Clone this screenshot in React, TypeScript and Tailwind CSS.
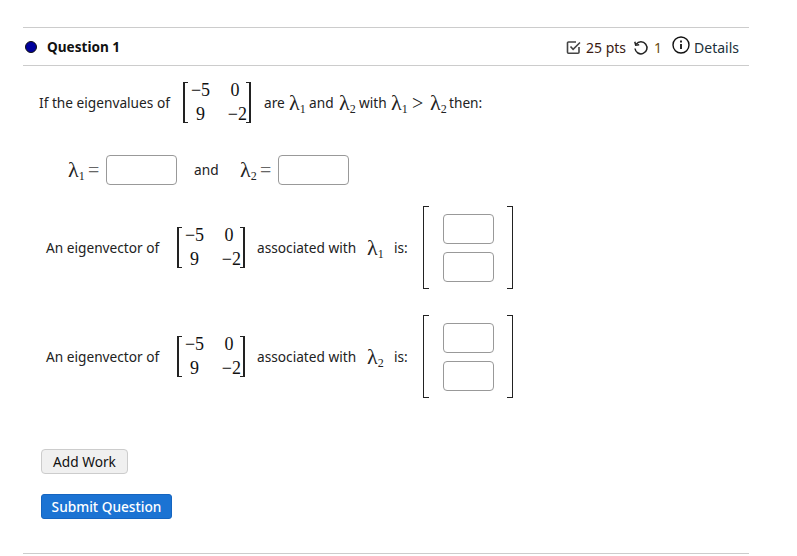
import React from "react";

function Lambda({ n, className = "" }: { n: number; className?: string }) {
  return (
    <span className={`font-['Liberation_Serif',serif] text-[#222] inline-flex items-baseline text-[22px] leading-none ${className}`}>
      <span className="font-['Liberation_Serif',serif]">λ</span>
      <sub className="font-['Liberation_Serif',serif] text-[12px] leading-none static align-baseline translate-y-[3px]">{n}</sub>
    </span>
  );
}

function Cell({ children, className = "" }: { children: React.ReactNode; className?: string }) {
  return <span className={`font-['Liberation_Serif',serif] ${className}`}>{children}</span>;
}

function Matrix() {
  return (
    <div className="text-[#111] relative w-[68px] h-[41px] text-[18px] leading-none">
      <div className="absolute left-0 top-0 bottom-0 w-[5px] border-l-2 border-t border-b border-[#222]" />
      <div className="absolute right-0 top-0 bottom-0 w-[5px] border-r-2 border-t border-b border-[#222]" />
      <div className="grid grid-cols-[33px_30px] gap-x-[3px] pl-[1px] -mt-[1px] gap-y-[6px] text-center">
        <Cell>−5</Cell>
        <Cell>0</Cell>
        <Cell>9</Cell>
        <Cell className="text-right pr-[3px]">−2</Cell>
      </div>
    </div>
  );
}

function Box({ w }: { w: string }) {
  return <input type="text" className={`${w} h-[30px] bg-white border border-[#999] rounded-[4px]`} />;
}

function VectorInput() {
  return (
    <div className="relative w-[90px] h-[83px] flex flex-col items-center justify-center gap-[8px]">
      <div className="absolute left-0 top-0 bottom-0 w-[6px] border-l border-t border-b border-[#222]" />
      <div className="absolute right-0 top-0 bottom-0 w-[6px] border-r border-t border-b border-[#222]" />
      <Box w="w-[51px]" />
      <Box w="w-[51px]" />
    </div>
  );
}

function EigenRow({ n, className }: { n: number; className: string }) {
  return (
    <div className={`flex items-center pl-[46px] ${className}`}>
      <span className="w-[131px]">An eigenvector of</span>
      <Matrix />
      <span className="ml-[12px] w-[110px]">associated with</span>
      <Lambda n={n} className="w-[27px]" />
      <span className="w-[29px]">is:</span>
      <VectorInput />
    </div>
  );
}

export default function App() {
  return (
    <div className="w-[797px] h-[556px] bg-white overflow-hidden font-['Noto_Sans',sans-serif] text-[13.7px] leading-[18px] text-[#222] pt-[27px]">
      <div className="mx-[23px] w-[726px] h-[39px] border-y border-[#ccc] flex items-center justify-between">
        <div className="flex items-center">
          <span className="ml-[2px] w-[12px] h-[12px] rounded-full bg-[#00009c] border border-[#111]" />
          <span className="ml-[10px] font-bold text-[13.6px] text-[#111]">Question 1</span>
        </div>
        <div className="flex items-center text-[14px] pr-[10px] pt-[2px] text-[#333]">
          <svg width="15" height="15" viewBox="0 0 15 15" fill="none" stroke="#444" strokeWidth="1.6">
            <path d="M13 7v5.2a1 1 0 0 1-1 1H2.5a1 1 0 0 1-1-1V3a1 1 0 0 1 1-1H10" />
            <path d="M4.5 6.5l2.6 2.8L14 2.5" />
          </svg>
          <span className="ml-[5px] text-[#3a1a12]">25 pts</span>
          <svg className="ml-[7px]" width="16" height="16" viewBox="0 0 16 16" fill="none" stroke="#222" strokeWidth="1.5">
            <path d="M3.2 4.2A6 6 0 1 1 2 8.5" />
            <path d="M1.8 1.8l.9 3.4 3.5-.5" />
          </svg>
          <span className="ml-[5px] text-[#6b4a10]">1</span>
          <svg className="ml-[10px] -mt-[5px]" width="18" height="18" viewBox="0 0 18 18" fill="none" stroke="#111" strokeWidth="1.4">
            <circle cx="9" cy="9" r="8" />
            <path d="M9 8v5" strokeWidth="1.8" />
            <path d="M9 4.6v1.8" strokeWidth="1.8" />
          </svg>
          <span className="ml-[4px] text-[#20303a]">Details</span>
        </div>
      </div>

      <div className="flex items-center pl-[39px] mt-[16px]">
        <span className="w-[144px]">If the eigenvalues of</span>
        <Matrix />
        <span className="ml-[13px] w-[25px]">are</span>
        <Lambda n={1} className="w-[20px]" />
        <span className="w-[30px]">and</span>
        <Lambda n={2} className="w-[20px]" />
        <span className="w-[32px]">with</span>
        <Lambda n={1} className="w-[21px]" />
        <Cell className="w-[18px] text-[20px] leading-none">&gt;</Cell>
        <Lambda n={2} className="w-[19px]" />
        <span>then:</span>
      </div>

      <div className="flex items-center pl-[68px] mt-[32px]">
        <Lambda n={1} className="w-[20px]" />
        <Cell className="w-[18px] text-[20px] text-[#666] leading-none">=</Cell>
        <Box w="w-[71px]" />
        <span className="ml-[17px] w-[46px]">and</span>
        <Lambda n={2} className="w-[20px]" />
        <Cell className="w-[18px] text-[20px] text-[#666] leading-none">=</Cell>
        <Box w="w-[71px]" />
      </div>

      <EigenRow n={1} className="mt-[21px]" />
      <EigenRow n={2} className="mt-[26px]" />

      <button className="block ml-[41px] mt-[51px] w-[87px] h-[25px] bg-[#f0f0f0] border border-[#ccc] rounded-[4px] text-[#111]">
        Add Work
      </button>
      <button className="block ml-[41px] mt-[20px] w-[131px] h-[25px] bg-[#1b73d3] border border-[#1565c0] rounded-[3px] text-white font-medium">
        Submit Question
      </button>

      <div className="mx-[23px] w-[726px] mt-[34px] border-t border-[#ccc]" />
    </div>
  );
}
